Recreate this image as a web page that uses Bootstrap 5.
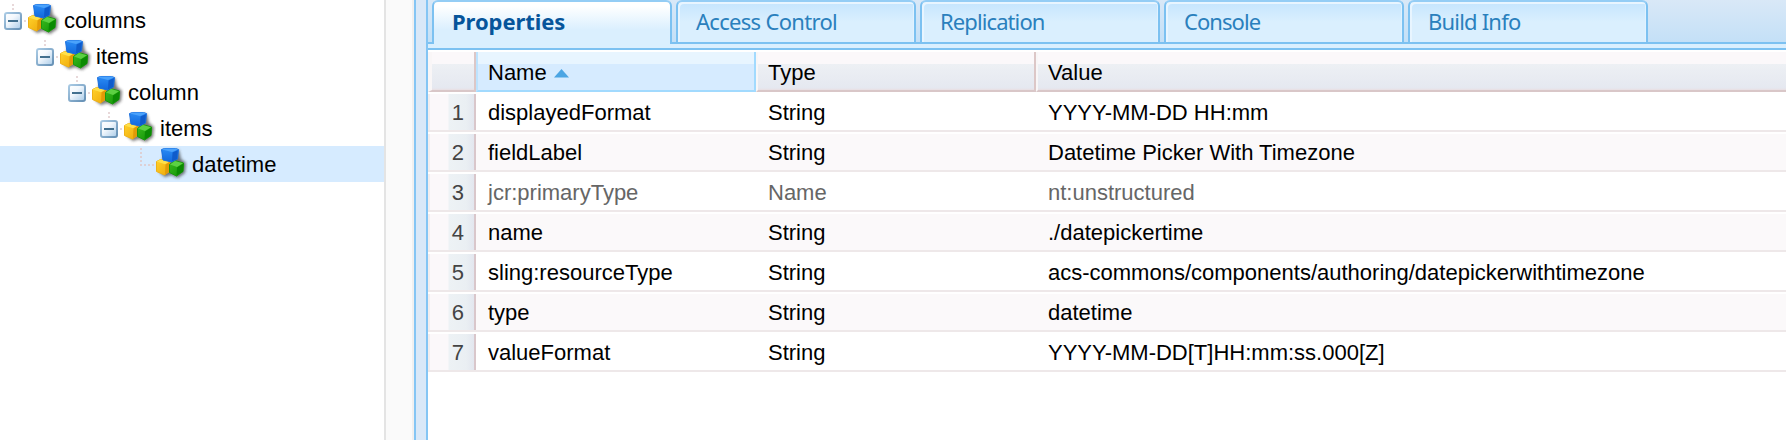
<!DOCTYPE html>
<html lang="en">
<head>
<meta charset="utf-8">
<title>CRXDE Lite</title>
<link href="https://cdn.jsdelivr.net/npm/bootstrap@5.3.0/dist/css/bootstrap.min.css" rel="stylesheet">
<style>
body{font:22px/36px "Liberation Sans",Arial,sans-serif;color:#000;background:#fff;height:440px}
.tree{width:384px;padding-top:2px}
.node{height:36px;white-space:nowrap}
.node.sel{background:#d6ebff}
.glyph{width:28px;height:36px;flex:none}
.cubes{width:32px;height:36px;flex:none;margin-right:4px}
.node span{line-height:38px;height:36px}
.gutter{width:30px;background:#fafafa;border-left:2px solid #e4e4e4;border-right:2px solid #f0f0f0}
.splitter{width:14px;background:#d9e8f8;border:solid #84c5f4;border-width:0 2px}
.strip{height:44px;padding-left:4px;gap:4px;background:linear-gradient(#d9e8f7,#c4e0f7 42px);border-bottom:2px solid #7cc1f1;font-family:"Noto Sans",Tahoma,sans-serif}
.tab{width:240px;height:42px;border:2px solid #7cc1f1;border-top-color:#94cdf5;border-bottom:0;border-radius:6px 6px 0 0;background:linear-gradient(#c5e5fe,#daeffe 20px);box-shadow:inset 2px 2px 0 #e8f5ff,inset -1px 0 0 #e0f2ff;color:#2a80bd;padding-left:18px;line-height:38px;white-space:nowrap}
.tab.on{height:44px;background:linear-gradient(#fff 4px,#daeffe 28px);color:#06559b;font-weight:700;box-shadow:none}
.under{height:6px;background:#daeffe;border-bottom:2px solid #7cc1f1}
.heads{height:42px;padding-top:2px}
.hd{background:linear-gradient(#fbf8fa 12px,#edf0f4 12px,#e5e8f0 36px,#e9dfe2);border-bottom:2px solid #d9c7c8;border-right:2px solid #dcc7c7;line-height:41px}
.hd.first{width:48px;border-left:4px solid #f9f6f7}
.hd.sort{width:280px;background:linear-gradient(#e8f5ff 12px,#d6ebff 12px);border-color:#a2dafe;border-left:2px solid #bde3fe;padding-left:10px}
.hd.kind{width:280px;border-left:2px solid #f8f6f7;padding-left:10px}
.hd.val{border-right:0;border-left:2px solid #f8f6f7;padding-left:10px}
.arrow{margin:5px 0 0 7px}
.line{height:40px;padding-top:2px;border-bottom:2px solid #eee8e9;line-height:37px;white-space:nowrap;background:#fff}
.line:nth-child(odd) .data{background:#fbf9fa}
.idx{width:48px;border-left:2px solid #f3eeef;border-right:2px solid #d9c7cb;padding-right:10px;color:#444;background:linear-gradient(90deg,#fbf8fa 18px,#edf2f5 19px,#eaeff3 36px,#e3e7ef 44px)}
.data{padding-left:12px}
.data>div{width:280px}
.system{color:#666}
</style>
<script src="https://cdn.jsdelivr.net/npm/bootstrap@5.3.0/dist/js/bootstrap.bundle.min.js"></script>
</head>
<body class="d-flex overflow-hidden">
<svg width="0" height="0" class="position-absolute">
<defs>
<linearGradient id="bl" x2="0" y2="1"><stop stop-color="#2b8cf5"/><stop offset="1" stop-color="#1268dc"/></linearGradient>
<linearGradient id="ye" x2="1" y2="1"><stop stop-color="#ffd22c"/><stop offset="1" stop-color="#efa808"/></linearGradient>
<linearGradient id="gr" x2="1" y2="1"><stop stop-color="#3cba20"/><stop offset="1" stop-color="#0f9304"/></linearGradient>
<linearGradient id="bx" x2="1" y2="1"><stop stop-color="#fff"/><stop offset=".4" stop-color="#f3f8fd"/><stop offset="1" stop-color="#a9cbe8"/></linearGradient>
<linearGradient id="be" x2="1" y2="1"><stop stop-color="#a9cae4"/><stop offset="1" stop-color="#6590b5"/></linearGradient>
<filter id="soft" x="-30%" y="-30%" width="160%" height="160%"><feGaussianBlur stdDeviation="1.4"/></filter>
<symbol id="minus" viewBox="0 0 28 36">
<path d="M13 2v6M24 19h2" stroke="#e8d8d9" stroke-width="2" stroke-dasharray="2 2"/>
<rect x="5" y="11" width="16" height="16" rx="2" fill="url(#bx)" stroke="url(#be)" stroke-width="2"/>
<path d="M8 19h10" stroke="#42708f" stroke-width="2"/>
</symbol>
<symbol id="elbow" viewBox="0 0 28 36"><path d="M13 2v17h13" fill="none" stroke="#ddd0d5" stroke-width="2" stroke-dasharray="2 2"/></symbol>
<symbol id="cube3" viewBox="0 0 32 36">
<path d="M9 4h14l2 9 5 4-1 10-7 5-7-3-6 2-6-5z" fill="#333" opacity=".65" filter="url(#soft)"/>
<g stroke-linejoin="round" stroke-width="1">
<path d="M.5 15.500l4-2 9.500 2v9.500l-5.500 4-8-3.500z" fill="url(#ye)" stroke="#eeb116"/>
<path d="M.5 15.500l4-2 9.500 2-5 2.700z" fill="#ffe04a"/><path d="M9.500 18.500l4.500-3v9.500l-5 4z" fill="#e29a08"/>
<path d="M13.500 18.500l5-4 9 2.500-.5 8.500-6.500 4.500-7-3.500z" fill="url(#gr)" stroke="#1a9a0c"/>
<path d="M14 18.500l5-3.500 8 2.300-6 3.700z" fill="#5cd043"/><path d="M21 21.500l6.500-4-.5 8-6.500 4z" fill="#0b8a03"/>
<path d="M5.500 3.500l3-1h11l3 1-1 9.500-6 3-8.500-2z" fill="url(#bl)" stroke="#1a6fdf"/>
<path d="M6 3.500l3-1h10.500l2.500 1-6 2.500z" fill="#4ba2fb"/><path d="M16.500 6.500l5.500-2.500-1 9-5 2.500z" fill="#0f5bcb"/>
</g>
</symbol>
</defs>
</svg>

<nav class="tree flex-shrink-0">
<div class="node d-flex"><svg class="glyph"><use href="#minus"/></svg><svg class="cubes"><use href="#cube3"/></svg><span>columns</span></div>
<div class="node d-flex" style="padding-left:32px"><svg class="glyph"><use href="#minus"/></svg><svg class="cubes"><use href="#cube3"/></svg><span>items</span></div>
<div class="node d-flex" style="padding-left:64px"><svg class="glyph"><use href="#minus"/></svg><svg class="cubes"><use href="#cube3"/></svg><span>column</span></div>
<div class="node d-flex" style="padding-left:96px"><svg class="glyph"><use href="#minus"/></svg><svg class="cubes"><use href="#cube3"/></svg><span>items</span></div>
<div class="node sel d-flex" style="padding-left:128px"><svg class="glyph"><use href="#elbow"/></svg><svg class="cubes"><use href="#cube3"/></svg><span>datetime</span></div>
</nav>
<div class="gutter flex-shrink-0"></div>
<div class="splitter flex-shrink-0"></div>

<main class="flex-grow-1">
<div class="strip d-flex">
<div class="tab on" style="letter-spacing:-.08px">Properties</div>
<div class="tab" style="letter-spacing:-.7px">Access Control</div>
<div class="tab" style="letter-spacing:-.9px">Replication</div>
<div class="tab" style="letter-spacing:-.95px">Console</div>
<div class="tab" style="letter-spacing:-.8px">Build Info</div>
</div>
<div class="under"></div>
<div class="grid-body">
<div class="heads d-flex">
<div class="hd first"></div>
<div class="hd sort d-flex">Name<svg width="16" height="9" class="arrow align-self-center"><path d="M0 8.500L7.500 0 15 8.500z" fill="#4ba5e3"/></svg></div>
<div class="hd kind">Type</div>
<div class="hd val flex-grow-1">Value</div>
</div>
<div class="line d-flex"><div class="idx text-end">1</div><div class="data d-flex flex-grow-1"><div>displayedFormat</div><div>String</div><div>YYYY-MM-DD HH:mm</div></div></div>
<div class="line d-flex"><div class="idx text-end">2</div><div class="data d-flex flex-grow-1"><div>fieldLabel</div><div>String</div><div>Datetime Picker With Timezone</div></div></div>
<div class="line d-flex"><div class="idx text-end">3</div><div class="data system d-flex flex-grow-1"><div>jcr:primaryType</div><div>Name</div><div>nt:unstructured</div></div></div>
<div class="line d-flex"><div class="idx text-end">4</div><div class="data d-flex flex-grow-1"><div>name</div><div>String</div><div>./datepickertime</div></div></div>
<div class="line d-flex"><div class="idx text-end">5</div><div class="data d-flex flex-grow-1"><div>sling:resourceType</div><div>String</div><div>acs-commons/components/authoring/datepickerwithtimezone</div></div></div>
<div class="line d-flex"><div class="idx text-end">6</div><div class="data d-flex flex-grow-1"><div>type</div><div>String</div><div>datetime</div></div></div>
<div class="line d-flex"><div class="idx text-end">7</div><div class="data d-flex flex-grow-1"><div>valueFormat</div><div>String</div><div>YYYY-MM-DD[T]HH:mm:ss.000[Z]</div></div></div>
</div>
</main>
</body>
</html>
